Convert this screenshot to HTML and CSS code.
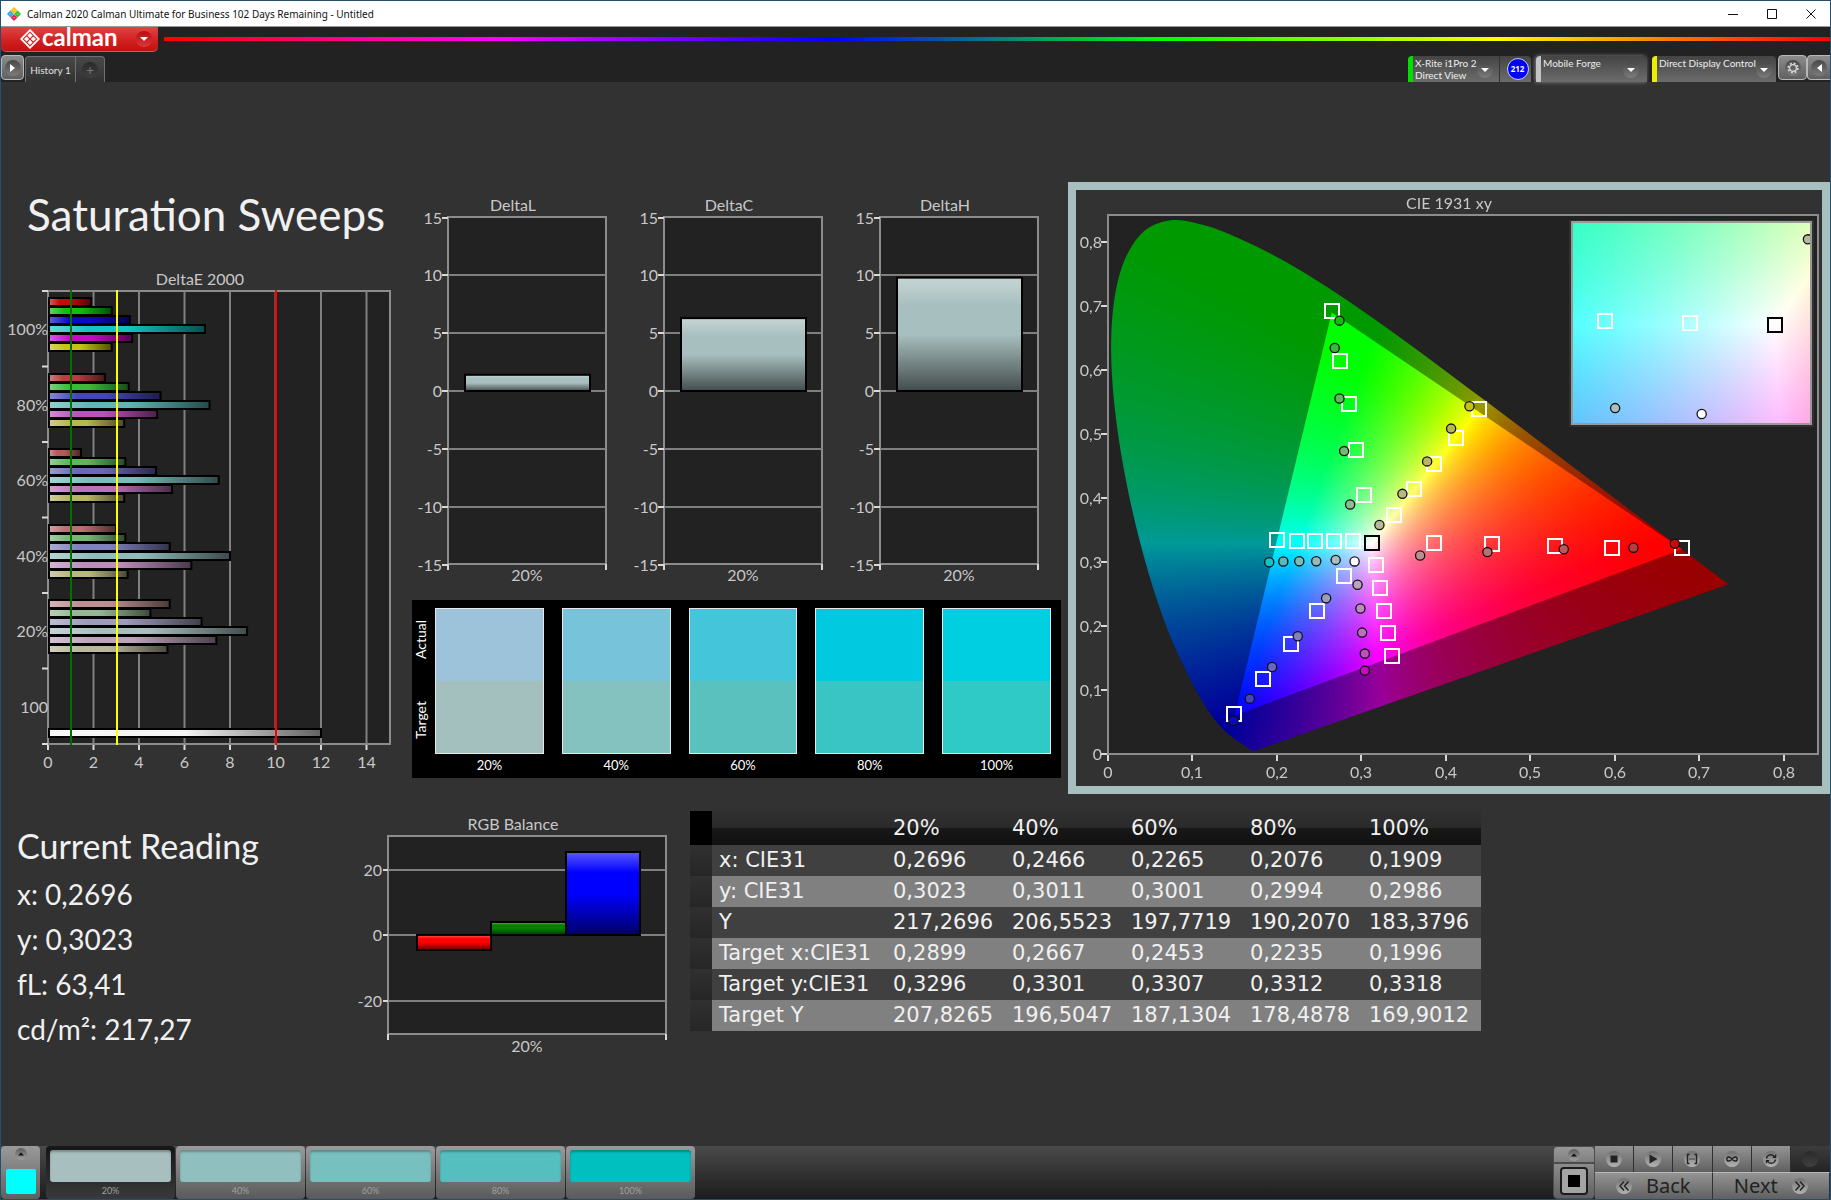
FILE: index.html
```html
<!DOCTYPE html>
<html lang="en">
<head>
<meta charset="utf-8">
<title>Calman 2020 Calman Ultimate for Business 102 Days Remaining - Untitled</title>
<link rel="stylesheet" href="styles.css">
</head>
<body>
<header class="titlebar">
  <svg class="app-icon" viewBox="0 0 14 14" aria-hidden="true">
    <path fill="#fdc500" d="M7 0l3.4 3.4L7 6.8 3.600 3.400z"/><path fill="#22c322" d="M10.600 3.600L14 7l-3.400 3.400L7.200 7z"/><path fill="#22a7e8" d="M3.400 3.600L6.800 7l-3.400 3.400L0 7z"/><path fill="#ee1c4e" d="M7 7.200l3.400 3.400L7 14l-3.400-3.400z"/>
    <path fill="none" stroke="#fff" stroke-opacity=".6" stroke-width=".8" d="M5.800 3.400h2.400M9.400 7h2.400M2.200 7h2.400M5.800 10.600h2.400"/>
  </svg>
  <span class="titlebar-text">Calman 2020 Calman Ultimate for Business 102 Days Remaining - Untitled</span>
  <div class="window-buttons">
    <button type="button" aria-label="Minimize"><svg viewBox="0 0 10 10"><path d="M0 5.500h10"/></svg></button>
    <button type="button" aria-label="Maximize"><svg viewBox="0 0 10 10"><path d="M.5 .5h9v9h-9z"/></svg></button>
    <button type="button" aria-label="Close"><svg viewBox="0 0 10 10"><path d="M.5 .5l9 9M9.500 .5l-9 9"/></svg></button>
  </div>
</header>

<div class="brandbar">
  <button type="button" class="brand">
    <svg class="brand-mark" viewBox="0 0 20 20" aria-hidden="true">
      <path d="M10 1.200L18.800 10 10 18.800 1.200 10z" fill="none" stroke="#fff" stroke-width="1.800"/>
      <path fill="#fff" d="M10 4l2.600 2.600L10 9.200 7.400 6.600zM13.400 7.400L16 10l-2.600 2.600-2.600-2.600zM6.600 7.400L9.200 10l-2.600 2.600L4 10zM10 10.800l2.600 2.600L10 16l-2.600-2.600z"/>
    </svg>
    <span class="brand-name">calman</span>
    <span class="knob knob-red"><svg viewBox="0 0 8 4"><path d="M0 0h8L4 4z"/></svg></span>
  </button>
  <div class="spectrum"></div>
</div>

<nav class="tabbar">
  <button type="button" class="edge-button" aria-label="Expand"><span class="knob"><svg class="tri-side" viewBox="0 0 5 8"><path d="M0 0l5 4-5 4z"/></svg></span></button>
  <button type="button" class="tab">History 1</button>
  <button type="button" class="tab tab-add" aria-label="Add tab"><span class="knob knob-dark">+</span></button>
  <div class="devices">
    <button type="button" class="device device-meter">
      <span class="device-name">X-Rite i1Pro 2<br>Direct View</span>
      <span class="knob"><svg viewBox="0 0 8 4"><path d="M0 0h8L4 4z"/></svg></span>
    </button>
    <button type="button" class="reading-count"><span>212</span></button>
    <button type="button" class="device device-source">
      <span class="device-name">Mobile Forge</span>
      <span class="knob"><svg viewBox="0 0 8 4"><path d="M0 0h8L4 4z"/></svg></span>
    </button>
    <button type="button" class="device device-display">
      <span class="device-name">Direct Display Control</span>
      <span class="knob"><svg viewBox="0 0 8 4"><path d="M0 0h8L4 4z"/></svg></span>
    </button>
    <button type="button" class="edge-button gear" aria-label="Settings"><span class="knob"><svg class="gear-icon" viewBox="0 0 12 12"><circle cx="6" cy="6" r="3.400" fill="none" stroke="#ddd" stroke-width="1.200"/><circle cx="6" cy="6" r="4.800" fill="none" stroke="#ddd" stroke-width="1.600" stroke-dasharray="1.900 1.870"/></svg></span></button>
    <button type="button" class="edge-button edge-last" aria-label="Collapse"><span class="knob"><svg class="tri-side" viewBox="0 0 5 8"><path d="M5 0L0 4l5 4z"/></svg></span></button>
  </div>
</nav>

<main class="workspace">
  <section class="row-top">
    <div class="sweeps">
      <h1>Saturation Sweeps</h1>
      <svg id="delta-e" class="chart" viewBox="0 0 404 510" role="img" aria-label="DeltaE 2000"></svg>
    </div>
    <div class="middle">
      <div class="deltas">
        <svg id="delta-l" class="chart" viewBox="0 0 216 400" role="img" aria-label="DeltaL"></svg>
        <svg id="delta-c" class="chart" viewBox="0 0 216 400" role="img" aria-label="DeltaC"></svg>
        <svg id="delta-h" class="chart" viewBox="0 0 216 400" role="img" aria-label="DeltaH"></svg>
      </div>
      <div class="swatches">
        <div class="swatch-side"><span>Actual</span><span>Target</span></div>
        <figure><div class="pair"><i class="actual-20"></i><i class="target-20"></i></div><figcaption>20%</figcaption></figure>
        <figure><div class="pair"><i class="actual-40"></i><i class="target-40"></i></div><figcaption>40%</figcaption></figure>
        <figure><div class="pair"><i class="actual-60"></i><i class="target-60"></i></div><figcaption>60%</figcaption></figure>
        <figure><div class="pair"><i class="actual-80"></i><i class="target-80"></i></div><figcaption>80%</figcaption></figure>
        <figure><div class="pair"><i class="actual-100"></i><i class="target-100"></i></div><figcaption>100%</figcaption></figure>
      </div>
    </div>
    <div class="cie">
      <canvas id="cie-fill" width="746" height="596"></canvas>
      <svg id="cie" class="chart chart-cie" viewBox="0 0 746 596" role="img" aria-label="CIE 1931 xy"></svg>
    </div>
  </section>

  <section class="row-bottom">
    <div class="reading">
      <h2>Current Reading</h2>
      <p>x: 0,2696</p>
      <p>y: 0,3023</p>
      <p>fL: 63,41</p>
      <p>cd/m²: 217,27</p>
    </div>
    <svg id="rgb" class="chart" viewBox="0 0 345 250" role="img" aria-label="RGB Balance"></svg>
    <table class="data">
      <colgroup><col class="col-stub"><col class="col-name"><col><col><col><col><col></colgroup>
      <thead><tr><td></td><td></td><th>20%</th><th>40%</th><th>60%</th><th>80%</th><th>100%</th></tr></thead>
      <tbody>
        <tr><td></td><th>x: CIE31</th><td>0,2696</td><td>0,2466</td><td>0,2265</td><td>0,2076</td><td>0,1909</td></tr>
        <tr><td></td><th>y: CIE31</th><td>0,3023</td><td>0,3011</td><td>0,3001</td><td>0,2994</td><td>0,2986</td></tr>
        <tr><td></td><th>Y</th><td>217,2696</td><td>206,5523</td><td>197,7719</td><td>190,2070</td><td>183,3796</td></tr>
        <tr><td></td><th>Target x:CIE31</th><td>0,2899</td><td>0,2667</td><td>0,2453</td><td>0,2235</td><td>0,1996</td></tr>
        <tr><td></td><th>Target y:CIE31</th><td>0,3296</td><td>0,3301</td><td>0,3307</td><td>0,3312</td><td>0,3318</td></tr>
        <tr><td></td><th>Target Y</th><td>207,8265</td><td>196,5047</td><td>187,1304</td><td>178,4878</td><td>169,9012</td></tr>
      </tbody>
    </table>
  </section>
</main>

<footer class="dock">
  <button type="button" class="current" aria-label="Current color"><span class="knob knob-up"><svg viewBox="0 0 8 4"><path d="M0 4h8L4 0z"/></svg></span><i></i></button>
  <div class="tiles">
    <button type="button" class="tile tile-active"><i class="tile-20"></i>20%</button>
    <button type="button" class="tile"><i class="tile-40"></i>40%</button>
    <button type="button" class="tile"><i class="tile-60"></i>60%</button>
    <button type="button" class="tile"><i class="tile-80"></i>80%</button>
    <button type="button" class="tile"><i class="tile-100"></i>100%</button>
  </div>
  <div class="pattern">
    <button type="button" class="pattern-up" aria-label="Show patterns"><span class="knob knob-up"><svg viewBox="0 0 8 4"><path d="M0 4h8L4 0z"/></svg></span></button>
    <button type="button" class="pattern-window" aria-label="Window pattern"><i></i></button>
  </div>
  <div class="transport">
    <button type="button" aria-label="Stop"><span class="knob knob-light"><svg viewBox="0 0 12 12"><path d="M2.500 2.500h7v7h-7z"/></svg></span></button>
    <button type="button" aria-label="Play"><span class="knob knob-light"><svg viewBox="0 0 12 12"><path d="M2.500 1.500L10.500 6l-8 4.500z"/></svg></span></button>
    <button type="button" aria-label="Read series"><span class="knob knob-light"><svg viewBox="0 0 12 12"><path class="line" d="M3.500 1.500H1.500v9h2M8.500 1.500h2v9h-2M3.500 6h1M5.500 6h1M7.500 6h1"/></svg></span></button>
    <button type="button" aria-label="Read continuously"><span class="knob knob-light"><svg viewBox="0 0 12 12"><path class="line" d="M6 6C4.500 3.500 .8 3 .8 6S4.500 8.500 6 6s5.200-3 5.200 0S7.500 8.500 6 6z"/></svg></span></button>
    <button type="button" aria-label="Repeat"><span class="knob knob-light"><svg viewBox="0 0 12 12"><path class="line" d="M1.500 5.500a4.300 4.300 0 0 1 8-1.500M10.500 6.500a4.300 4.300 0 0 1-8 1.500"/><path d="M11.200 1v4H7.200zM.8 11V7h4z"/></svg></span></button>
    <button type="button" class="off" aria-label="Record" disabled><span class="knob knob-dark"></span></button>
    <button type="button" class="step step-back"><span class="knob knob-light"><svg viewBox="0 0 12 12"><path class="line" d="M6 1.500L2 6l4 4.500M10.500 1.500L6.500 6l4 4.500"/></svg></span>Back</button>
    <button type="button" class="step step-next">Next<span class="knob knob-light"><svg viewBox="0 0 12 12"><path class="line" d="M6 1.500L10 6l-4 4.500M1.500 1.500L5.500 6l-4 4.500"/></svg></span></button>
  </div>
</footer>
<script src="charts.js"></script>
</body>
</html>
```

FILE: styles.css
```css
* { box-sizing: border-box; }

body {
  margin: 0;
  min-height: 100vh;
  display: flex;
  flex-direction: column;
  border: 1px solid #24506e;
  background: #323232;
  color: #f0f0f0;
  font-family: Lato, "Open Sans", sans-serif;
}

button {
  margin: 0;
  padding: 0;
  border: 0;
  background: none;
  color: inherit;
  font: inherit;
}

h1, h2, p, figure { margin: 0; font-weight: 400; }

/* Title bar */
.titlebar {
  display: flex;
  align-items: center;
  height: 26px;
  padding-left: 6px;
  gap: 5px;
  background: #fff;
  color: #111;
  border-bottom: 1px solid #9a9a9a;
  font: 10px "Noto Sans", sans-serif;
}
.titlebar-text { padding-left: 1px; }
.app-icon { width: 14px; height: 14px; }
.window-buttons { margin-left: auto; display: flex; }
.window-buttons button { width: 39px; height: 24px; display: grid; place-items: center; }
.window-buttons svg { width: 10px; height: 10px; fill: none; stroke: #111; }

/* Brand row */
.brandbar { display: flex; align-items: flex-start; gap: 6px; height: 27px; background: #222; }
.brand {
  width: 157px;
  height: 25px;
  display: flex;
  align-items: center;
  padding: 0 6px 1px 19px;
  background: linear-gradient(#e04444, #d01f1f 60%, #c41010);
  border-bottom: 1px solid #a66;
  border-radius: 0 0 5px 5px;
  color: #fff;
}
.brand-mark { width: 20px; height: 20px; margin-right: 2px; }
.brand-name { font-size: 24px; line-height: 20px; font-weight: 700; margin-top: -4px; }
.brand .knob { margin-left: auto; }
.spectrum { flex: 1; height: 4px; margin-top: 10px; background: linear-gradient(90deg, #f00, #f0f, #00f, #0f0, #ff0, #f00); }

.knob {
  flex: none;
  width: 16px;
  height: 16px;
  border-radius: 50%;
  display: grid;
  place-items: center;
  background: linear-gradient(#484848, #7c7c7c);
}
.knob svg { width: 8px; height: 4px; fill: #fff; }
.knob .tri-side { width: 5px; height: 8px; }
.knob .gear-icon { width: 12px; height: 12px; }
.knob-red { background: linear-gradient(#b80c14, #dc3838); }
.knob-dark { background: linear-gradient(#2a2a2a, #404040); color: #777; font-size: 14px; line-height: 14px; }
.knob-light { background: linear-gradient(#707070, #b4b4b4); }
.knob-light svg { width: 12px; height: 12px; fill: #222; }
.knob .line { fill: none; stroke: #222; stroke-width: 1.4; }
.knob-up { width: 12px; height: 12px; background: linear-gradient(#5c5c5c, #a0a0a0); }
.knob-up svg { width: 6px; height: 4px; fill: #111; }

/* Tab row */
.tabbar { display: flex; align-items: flex-end; height: 28px; background: #222; }
.edge-button {
  width: 23px;
  height: 25px;
  margin-bottom: 2px;
  display: grid;
  place-items: center;
  background: linear-gradient(#8c8c8c, #606060);
  border: 1px solid #b8b8b8;
  border-radius: 4px;
}
.tab {
  width: 51px;
  height: 26px;
  margin-left: 1px;
  border: 1px solid #707070;
  border-bottom: 0;
  border-radius: 4px 0 0 0;
  background: linear-gradient(#484848, #323232);
  color: #e0e0e0;
  font-size: 10px;
}
.tab-add { width: 30px; margin-left: -1px; border-radius: 0 4px 0 0; display: grid; place-items: center; }
.devices { margin-left: auto; display: flex; align-items: flex-end; }
.device {
  height: 26px;
  display: flex;
  align-items: flex-start;
  padding: 1px 8px 0 2px;
  border-left: 5px solid #00e000;
  border-radius: 4px 4px 0 0;
  background: linear-gradient(#444, #6c6c6c);
  color: #eee;
  font-size: 10px;
  line-height: 12px;
  text-align: left;
}
.device .knob { margin: 5px 0 0 auto; }
.device-name { white-space: nowrap; }
.device-meter { width: 92px; border-top-right-radius: 0; border-right: 1px solid #333; }
.reading-count { width: 31px; height: 26px; margin-right: 5px; padding-left: 4px; display: grid; place-items: center; background: linear-gradient(#444, #6c6c6c); border-radius: 0 4px 0 0; }
.reading-count span { width: 22px; height: 22px; border: 1px solid #ccd; border-radius: 50%; background: #00f; color: #fff; font: 700 8px/20px "Open Sans", sans-serif; }
.device-source { width: 111px; margin-right: 5px; border-left-color: #c4c4c4; box-shadow: -1px 0 4px #888; }
.device-display { width: 124px; margin-right: 2px; padding-right: 5px; border-left-color: #ee0; }
.gear { width: 29px; }
.edge-last { border-right: 0; border-radius: 4px 0 0 4px; }

/* Workspace */
.workspace { flex: 1; padding-top: 100px; }
.row-top { display: grid; grid-template-columns: 404fr 663fr 762fr; align-items: start; }
.chart { display: block; width: 100%; height: auto; font-size: 16px; fill: #c8c8c8; }
.chart .plot { fill: #222; stroke: #8c8c8c; stroke-width: 2; }
.chart .plot-frame { fill: none; }
.chart .grid { stroke: #808080; stroke-width: 2; }
.chart .tick { stroke: #d8d8d8; stroke-width: 2; }
.chart .bar { stroke: #000; stroke-width: 2; }
.sweeps h1 { height: 88px; padding-left: 26px; font-size: 44px; line-height: 64px; white-space: nowrap; }
.middle { padding: 12px 7px 0 0; }
.deltas { display: grid; grid-template-columns: repeat(3, 1fr); padding-right: 8px; }

.swatches {
  display: grid;
  grid-template-columns: 12px repeat(5, 1fr);
  margin: 6px 0 0 7px;
  padding: 8px 1px 4px 2px;
  background: #000;
  color: #fff;
  font-size: 13px;
  line-height: 18px;
  text-align: center;
}
.swatches figure { padding: 0 9px; }
.swatch-side { display: grid; grid-template-rows: 64px 96px; justify-items: center; align-items: center; font-size: 14px; }
.swatch-side span { writing-mode: vertical-rl; rotate: 180deg; line-height: 14px; }
.pair { height: 146px; display: grid; border: 1px solid #e8e8e8; margin-bottom: 2px; }
.actual-20 { background: #9cc3d9; }
.target-20 { background: #a3c0be; }
.actual-40 { background: #77c4da; }
.target-40 { background: #84c2bf; }
.actual-60 { background: #44c5da; }
.target-60 { background: #5bc1bf; }
.actual-80 { background: #00c9e0; }
.target-80 { background: #38c5c3; }
.actual-100 { background: #00cfe2; }
.target-100 { background: #30cac6; }

.cie { display: grid; border: 8px solid #a8bfbf; }
.cie canvas, .cie svg { grid-area: 1 / 1; width: 100%; height: auto; }
.square { fill: none; stroke: #fff; stroke-width: 2; }
.square-white { stroke: #000; }
.dot { stroke: #111; stroke-width: 1.3; }

.row-bottom { display: grid; grid-template-columns: 344fr 345fr 791fr 349fr; align-items: start; margin: 17px 0 16px; }
.reading { padding: 9px 0 0 16px; white-space: nowrap; }
.reading h2 { font-size: 34px; line-height: 52px; }
.reading p { font-size: 28px; line-height: 45px; }

.data { width: 100%; table-layout: fixed; border-collapse: collapse; font: 21px/30px "DejaVu Sans", sans-serif; text-align: left; white-space: nowrap; }
.data .col-stub { width: 22px; }
.data .col-name { width: 174px; }
.data th, .data td { height: 31px; padding: 0 0 1px 7px; font-weight: 400; }
.data thead th, .data thead td { height: 34px; background: linear-gradient(#303030, #2a2a2a 50%, #181818 50%, #101010); }
.data thead td:first-child { background: #000; }
.data tbody tr { background: #404040; }
.data tbody tr:nth-child(even) { background: #808080; }
.data tbody td:first-child { background: linear-gradient(#303030, #262626); }

/* Dock */
.dock { display: flex; height: 53px; background: linear-gradient(#4a4a4a, #1c1c1c); }
.current { width: 39px; padding: 2px 4px 5px; display: flex; flex-direction: column; align-items: center; justify-content: space-between; background: linear-gradient(#9a9a9a, #606060); border-radius: 4px; }
.current i { width: 30px; height: 25px; border-radius: 2px; background: #0ff; }
.tiles { display: flex; gap: 1px; margin-left: 6px; }
.tile { width: 129px; padding: 4px 4px 0; background: linear-gradient(#9a9a9a, #5a5a5a); border-radius: 4px; color: #a0a0a0; font-size: 9px; line-height: 17px; }
.tile i { display: block; height: 32px; border-radius: 3px; box-shadow: inset 0 2px 2px #0004; }
.tile-active { background: linear-gradient(#161616, #3a3a3a); }
.tile-20 { background: #a8bfbf; }
.tile-40 { background: #90bfbf; }
.tile-60 { background: #78bfbf; }
.tile-80 { background: #55bfbf; }
.tile-100 { background: #00bfbf; }

.pattern { width: 42px; margin-left: auto; display: flex; flex-direction: column; }
.pattern button { display: grid; place-items: center; background: linear-gradient(#989898, #808080); border: 1px solid #4c4c4c; }
.pattern .pattern-up { height: 17px; border-radius: 4px 4px 0 0; }
.pattern .pattern-window { height: 36px; background: linear-gradient(#8c8c8c, #606060); border-radius: 0 0 4px 4px; }
.pattern-window i { width: 26px; height: 26px; border: 7px solid #a4a4a4; border-radius: 3px; outline: 2px solid #1c1c1c; outline-offset: -1px; background: #000; }

.transport { width: 235px; display: grid; grid-template: 26px 27px / repeat(6, 1fr); }
.transport button { display: flex; align-items: center; justify-content: center; background: linear-gradient(#949494, #606060); border-right: 1px solid #303030; }
.transport .off { background: linear-gradient(#3c3c3c, #242424); border-right: 0; }
.transport .step { grid-column: span 3; gap: 14px; border-top: 1px solid #b8b8b8; color: #222; font: 20px/24px "Noto Sans", sans-serif; }
```

FILE: charts.js
```js
const NS = 'http://www.w3.org/2000/svg';

function add(parent, name, attrs, text) {
  const node = document.createElementNS(NS, name);
  for (const key in attrs) node.setAttribute(key, attrs[key]);
  if (text !== undefined) node.textContent = text;
  parent.appendChild(node);
  return node;
}

const line = (svg, cls, x1, y1, x2, y2) => add(svg, 'line', { class: cls, x1, y1, x2, y2 });
const label = (svg, x, y, anchor, text) => add(svg, 'text', { x, y, 'text-anchor': anchor }, text);

// Highlight-to-shadow overlay shared by every bar of one chart.
function shade(svg, id, horizontal) {
  const grad = add(svg, 'linearGradient', { id, x1: 0, y1: 0, x2: horizontal ? 1 : 0, y2: horizontal ? 0 : 1 });
  [[0, '#fff', 0.35], [0.25, '#fff', 0], [0.5, '#000', 0], [1, '#000', 0.6]].forEach(([offset, color, opacity]) =>
    add(grad, 'stop', { offset, 'stop-color': color, 'stop-opacity': opacity }));
}

function bar(svg, shadeId, x, y, width, height, fill) {
  add(svg, 'rect', { x, y, width, height, fill });
  add(svg, 'rect', { class: 'bar', x, y, width, height, fill: `url(#${shadeId})` });
}

const COLORS = {
  100: ['#c40a0a', '#10bd10', '#0a0ac4', '#12c4c4', '#c40ac4', '#c4c410'],
  80: ['#bb3c3c', '#3cb83c', '#4646bc', '#5ab8b8', '#bd50bd', '#b8b850'],
  60: ['#b85858', '#5cb85c', '#6868bc', '#78bcbc', '#bc70bc', '#b8b468'],
  40: ['#b87070', '#74b874', '#8080bc', '#90bcbc', '#bc8cbc', '#b8b880'],
  20: ['#bc9090', '#94b894', '#9c9cbc', '#a8bfbf', '#bca4bc', '#b8b89c']
};

function deltaE() {
  const svg = document.getElementById('delta-e');
  const unit = 22.75, left = 47, top = 21, bottom = 474, right = 389;
  shade(svg, 'shade-e', true);
  label(svg, 199, 15, 'middle', 'DeltaE 2000');
  add(svg, 'rect', { class: 'plot', x: left, y: top, width: right - left, height: bottom - top });
  for (let v = 0; v <= 14; v += 2) {
    const x = left + v * unit;
    if (v) line(svg, 'grid', x, top, x, bottom);
    line(svg, 'tick', x, bottom + 1, x, bottom + 6);
    label(svg, x, 498, 'middle', v);
  }
  ['100%', '80%', '60%', '40%', '20%', '100'].forEach((t, i) => label(svg, left, 65 + i * 75.5, 'end', t));
  for (let i = 0; i <= 6; i++) line(svg, 'tick', left - 6, top + i * 75.5, left, top + i * 75.5);
  const values = {
    100: [1.9, 2.8, 3.6, 6.9, 3.7, 2.8],
    80: [2.5, 3.55, 4.95, 7.1, 4.8, 3.35],
    60: [1.45, 3.4, 4.75, 7.5, 5.45, 3.35],
    40: [3, 3.4, 5.35, 8, 6.3, 3.5],
    20: [5.35, 4.5, 6.75, 8.75, 7.4, 5.25]
  };
  [100, 80, 60, 40, 20].forEach((sat, g) => values[sat].forEach((v, i) =>
    bar(svg, 'shade-e', left + 1, Math.round(28 + g * 75.5 + i * 9), v * unit - 1, 8, COLORS[sat][i])));
  bar(svg, 'shade-e', left + 1, 459, 12 * unit - 1, 8, '#f4f4f4');
  [[1, '#007000'], [3, '#ffff00'], [10, '#ff0000']].forEach(([v, stroke]) => {
    const x = Math.floor(left + v * unit) + 1;
    add(svg, 'line', { x1: x, x2: x, y1: top - 1, y2: bottom + 1, stroke, 'stroke-width': 2 });
  });
}

function delta(id, title, value) {
  const svg = document.getElementById(id);
  const left = 43, right = 201, top = 23, bottom = 370, unit = (bottom - top) / 30;
  shade(svg, 'shade-' + id, false);
  label(svg, 108, 17, 'middle', title);
  add(svg, 'rect', { class: 'plot', x: left, y: top, width: right - left, height: bottom - top });
  for (let v = 15; v >= -15; v -= 5) {
    const y = Math.round(197 - v * unit);
    if (Math.abs(v) < 15) line(svg, 'grid', left, y, right, y);
    line(svg, 'tick', left - 6, y, left, y);
    label(svg, left - 6, y + 6, 'end', v);
  }
  line(svg, 'tick', left, bottom, left, bottom + 6);
  line(svg, 'tick', right, bottom, right, bottom + 6);
  label(svg, 122, 387, 'middle', '20%');
  bar(svg, 'shade-' + id, 60, 197 - value * unit, 125, value * unit, '#a8bfbf');
}

function rgb() {
  const svg = document.getElementById('rgb');
  shade(svg, 'shade-rgb', false);
  label(svg, 168, 19, 'middle', 'RGB Balance');
  add(svg, 'rect', { class: 'plot', x: 43, y: 25, width: 278, height: 198 });
  [[20, 59], [0, 124], [-20, 190]].forEach(([v, y]) => {
    line(svg, 'grid', 43, y, 321, y);
    line(svg, 'tick', 38, y, 43, y);
    label(svg, 37, y + 6, 'end', v);
  });
  line(svg, 'tick', 43, 223, 43, 229);
  line(svg, 'tick', 321, 223, 321, 229);
  label(svg, 182, 241, 'middle', '20%');
  bar(svg, 'shade-rgb', 72, 124, 74, 15, '#ff0000');
  bar(svg, 'shade-rgb', 146, 111, 75, 13, '#008000');
  bar(svg, 'shade-rgb', 221, 41, 74, 83, '#0000ff');
}

// Chromaticity diagram: plot area and zoomed inset, in panel units.
const PLOT = { left: 32, top: 25, right: 742, bottom: 564 };
const INSET = { left: 496, top: 32, width: 239, height: 202 };
const px = x => PLOT.left + x * 844.5;
const py = y => PLOT.bottom - y * 640;
const ix = x => 698.5 + (x - 0.3127) * 3715;
const iy = y => 134.5 - (y - 0.329) * 3131;

const LOCUS = [[.1741,.0050],[.1714,.0051],[.1689,.0069],[.1644,.0109],[.1566,.0177],[.1440,.0297],[.1355,.0399],[.1241,.0578],[.1096,.0868],[.0913,.1327],[.0687,.2007],[.0454,.2950],[.0235,.4127],[.0082,.5384],[.0039,.6548],[.0139,.7502],[.0389,.8120],[.0743,.8338],[.1142,.8262],[.1547,.8059],[.1929,.7816],[.2296,.7543],[.2658,.7243],[.3016,.6923],[.3373,.6589],[.3731,.6245],[.4087,.5896],[.4441,.5547],[.4788,.5202],[.5125,.4866],[.5448,.4544],[.5752,.4242],[.6029,.3965],[.6270,.3725],[.6482,.3514],[.6658,.3340],[.6915,.3083],[.7190,.2809],[.7347,.2653]];
const GAMUT = [[.68,.32],[.265,.69],[.15,.06]];

function chroma(x, y) {
  const X = x / y, Z = (1 - x - y) / y;
  const c = [
    3.2406 * X - 1.5372 - 0.4986 * Z,
    -0.9689 * X + 1.8758 + 0.0415 * Z,
    0.0557 * X - 0.2040 + 1.0570 * Z
  ].map(v => Math.max(0, v));
  const peak = Math.max(...c);
  return c.map(v => 255 * v / peak);
}

function field(width, height, toXY, gain) {
  const layer = document.createElement('canvas');
  layer.width = width;
  layer.height = height;
  const ctx = layer.getContext('2d');
  const image = ctx.createImageData(width, height);
  for (let j = 0, k = 0; j < height; j++) {
    for (let i = 0; i < width; i++, k += 4) {
      const [x, y] = toXY(i + 0.5, j + 0.5);
      const c = chroma(x, Math.max(y, 0.001));
      for (let n = 0; n < 3; n++) image.data[k + n] = c[n] * gain;
      image.data[k + 3] = 255;
    }
  }
  ctx.putImageData(image, 0, 0);
  return layer;
}

function locusPath() {
  const path = new Path2D();
  const p = LOCUS.map(([x, y]) => [px(x), py(y)]);
  path.moveTo(...p[0]);
  for (let i = 0; i < p.length - 1; i++) {
    const a = p[Math.max(i - 1, 0)], b = p[i], c = p[i + 1], d = p[Math.min(i + 2, p.length - 1)];
    path.bezierCurveTo(b[0] + (c[0] - a[0]) / 6, b[1] + (c[1] - a[1]) / 6, c[0] - (d[0] - b[0]) / 6, c[1] - (d[1] - b[1]) / 6, c[0], c[1]);
  }
  path.closePath();
  return path;
}

function cieFill() {
  const ctx = document.getElementById('cie-fill').getContext('2d');
  ctx.fillStyle = '#222';
  ctx.fillRect(PLOT.left, PLOT.top, PLOT.right - PLOT.left, PLOT.bottom - PLOT.top);
  const toXY = (i, j) => [(i - PLOT.left) / 844.5, (PLOT.bottom - j) / 640];
  const locus = locusPath();
  const triangle = new Path2D('M' + GAMUT.map(([x, y]) => px(x) + ' ' + py(y)).join('L') + 'Z');
  ctx.save();
  ctx.clip(locus);
  ctx.drawImage(field(746, 596, toXY, 0.6), 0, 0);
  ctx.clip(triangle);
  ctx.drawImage(field(746, 596, toXY, 1), 0, 0);
  ctx.restore();
  ctx.fillStyle = '#303030';
  ctx.fillRect(INSET.left - 3, INSET.top - 2, INSET.width + 6, INSET.height + 5);
  ctx.drawImage(field(INSET.width, INSET.height,
    (i, j) => [0.3127 + (i + INSET.left - 698.5) / 3715, 0.329 + (134.5 - j - INSET.top) / 3131], 1), INSET.left, INSET.top);
}

const TARGETS = [
  [.3857,.330],[.4547,.3275],[.5295,.325],[.597,.3225],[.6800,.3225],
  [.303,.404],[.294,.4757],[.285,.5467],[.2745,.6135],[.2655,.6926],
  [.2795,.2786],[.248,.223],[.2165,.1711],[.1836,.1167],[.149,.0627],
  [.2905,.3325],[.2675,.3325],[.2453,.3325],[.2238,.3325],[.2002,.334],
  [.3170,.2947],[.3220,.2594],[.3270,.2242],[.3310,.189],[.3360,.1526],
  [.3384,.3737],[.3625,.4133],[.3862,.4528],[.4124,.4944],[.4390,.5383]
];
const MEASURED = [
  [[.3696,.3101],[.4493,.3155],[.5397,.3199],[.6222,.3224],[.6712,.3287]],
  [[.2867,.3898],[.2796,.4733],[.2741,.5554],[.2685,.6344],[.2741,.6771]],
  [[.2583,.2434],[.2247,.1841],[.1943,.1359],[.1679,.0865],[.1485,.0519]],
  [[.2696,.3033],[.2466,.3011],[.2265,.3011],[.2076,.3008],[.1909,.2996]],
  [[.2955,.2644],[.2989,.2273],[.3009,.1897],[.3041,.1569],[.3041,.1303]],
  [[.3214,.3578],[.3486,.4065],[.3779,.4572],[.4063,.5084],[.4280,.5434]]
];

const square = (svg, x, y, cls) => add(svg, 'rect', { class: cls, x: Math.round(x) - 7, y: Math.round(y) - 7, width: 14, height: 14 });
const dot = (svg, cx, cy, fill) => add(svg, 'circle', { class: 'dot', cx, cy, r: 4.6, fill });

function cie() {
  const svg = document.getElementById('cie');
  label(svg, 373, 19, 'middle', 'CIE 1931 xy');
  add(svg, 'rect', { class: 'plot plot-frame', x: PLOT.left, y: PLOT.top, width: PLOT.right - PLOT.left, height: PLOT.bottom - PLOT.top });
  for (let i = 0; i <= 8; i++) {
    const text = i ? '0,' + i : '0';
    const x = Math.round(px(i / 10)), y = Math.round(py(i / 10));
    line(svg, 'tick', x, PLOT.bottom + 1, x, PLOT.bottom + 7);
    line(svg, 'tick', PLOT.left - 7, y, PLOT.left - 1, y);
    label(svg, x, 588, 'middle', text);
    label(svg, PLOT.left - 6, y + 6, 'end', text);
  }
  TARGETS.forEach(([x, y]) => square(svg, px(x), py(y), 'square'));
  square(svg, px(.3127), py(.329), 'square square-white');
  MEASURED.forEach((run, hue) => run.forEach(([x, y], i) =>
    dot(svg, px(x), py(y), COLORS[(i + 1) * 20][hue])));
  dot(svg, px(.2920), py(.3009), '#fff');

  const clip = add(svg, 'clipPath', { id: 'inset-clip' });
  add(clip, 'rect', { x: INSET.left, y: INSET.top, width: INSET.width, height: INSET.height });
  const inset = add(svg, 'g', { 'clip-path': 'url(#inset-clip)' });
  square(inset, ix(.2671), iy(.3302), 'square');
  square(inset, ix(.2900), iy(.3296), 'square');
  square(inset, ix(.3128), iy(.3290), 'square square-white');
  dot(inset, ix(.2698), iy(.3023), '#a8bfbf');
  dot(inset, ix(.2931), iy(.3004), '#fff');
  dot(inset, ix(.3217), iy(.3562), '#b8b89c');
  add(svg, 'rect', { x: INSET.left, y: INSET.top, width: INSET.width, height: INSET.height, fill: 'none', stroke: '#999', 'stroke-width': 2 });
}

deltaE();
delta('delta-l', 'DeltaL', 1.4);
delta('delta-c', 'DeltaC', 6.3);
delta('delta-h', 'DeltaH', 9.8);
rgb();
cieFill();
cie();
```
